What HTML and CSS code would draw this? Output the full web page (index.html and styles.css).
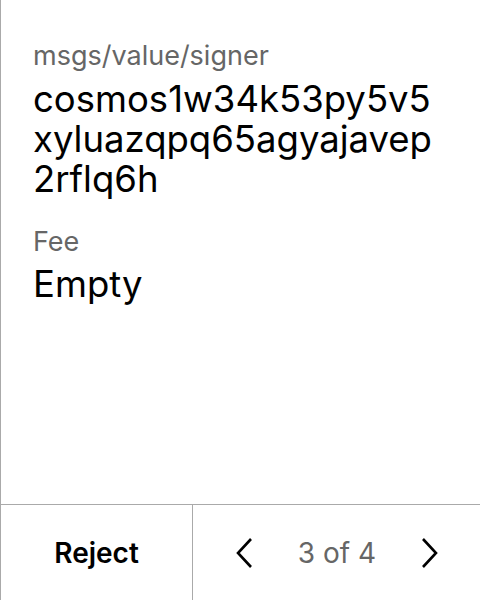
FILE: index.html
```html
<!DOCTYPE html>
<html>
<head>
<meta charset="utf-8">
<link rel="stylesheet" href="styles.css">
</head>
<body>
<div class="screen">
  <div class="content">
    <div class="field">
      <div class="label">msgs/value/signer</div>
      <div class="value">cosmos1w34k53py5v5xyluazqpq65agyajavep2rflq6h</div>
    </div>
    <div class="field">
      <div class="label">Fee</div>
      <div class="value">Empty</div>
    </div>
  </div>
  <div class="footer">
    <div class="reject">Reject</div>
    <div class="pager">
      <svg class="arrow" width="20" height="32" viewBox="0 0 20 32"><path d="M17 2 L4 16 L17 30" fill="none" stroke="#000" stroke-width="2.6"/></svg>
      <span class="count">3 of 4</span>
      <svg class="arrow" width="20" height="32" viewBox="0 0 20 32"><path d="M3 2 L16 16 L3 30" fill="none" stroke="#000" stroke-width="2.6"/></svg>
    </div>
  </div>
</div>
</body>
</html>
```
FILE: styles.css
```css
html, body { margin: 0; padding: 0; background: #fff; }
.screen {
  width: 480px; height: 600px; box-sizing: border-box;
  border-left: 1px solid #aaa;
  display: flex; flex-direction: column;
  font-family: Inter, "Noto Sans", sans-serif;
}
.content { flex: 1; padding: 40px 40px 0 32px; }
.field + .field { margin-top: 27px; }
.label { font-size: 27px; color: #666; line-height: 32px; }
.value { font-size: 36.5px; color: #000; line-height: 40px; word-break: break-all; margin-top: 7px; }
.field + .field .value { margin-top: 6px; }
.footer { height: 95px; border-top: 1px solid #aaa; display: flex; }
.reject { width: 191px; border-right: 1px solid #aaa; display: flex; align-items: center; justify-content: center; font-size: 28px; font-weight: 600; }
.pager { flex: 1; display: flex; align-items: center; justify-content: space-between; padding: 0 40px 0 41px; }
.count { font-size: 28px; color: #666; }
```
